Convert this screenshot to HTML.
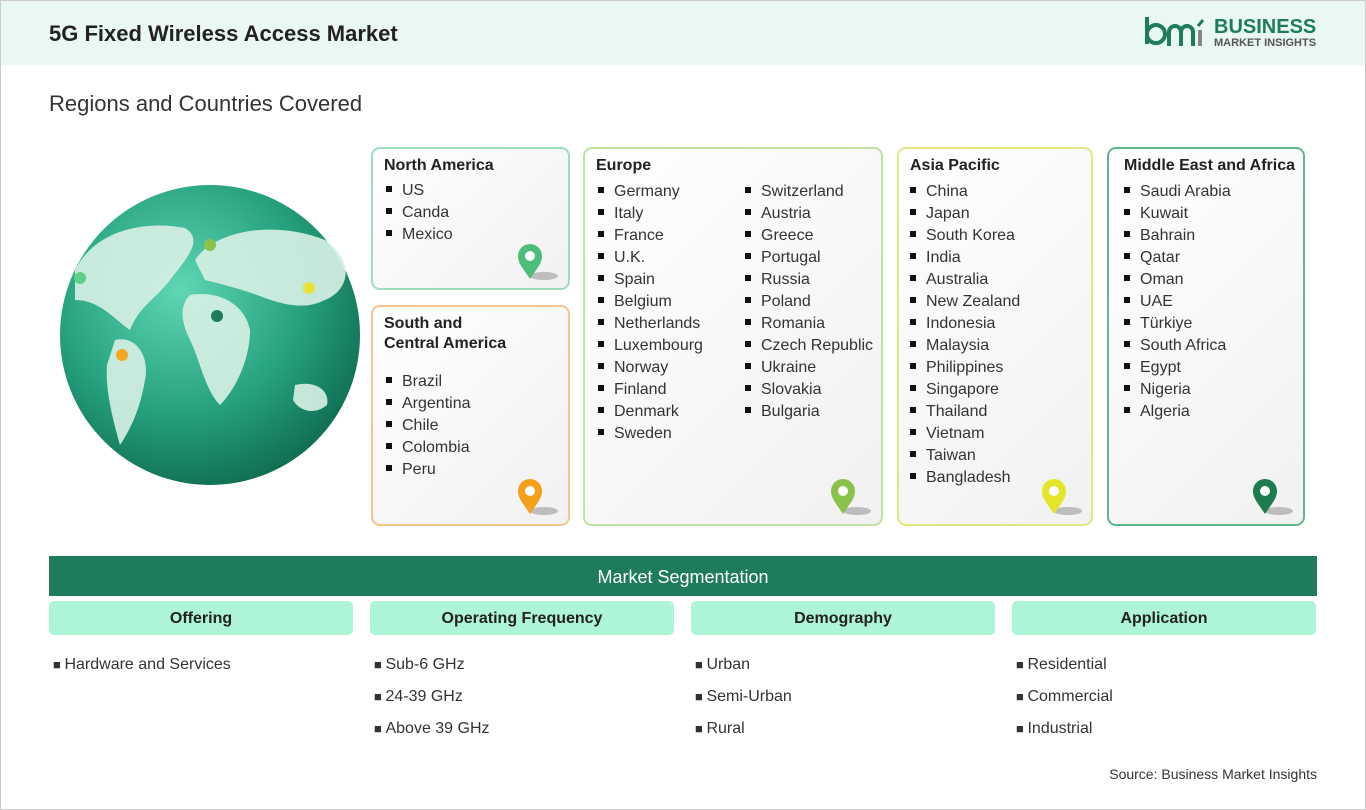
<!DOCTYPE html>
<html><head><meta charset="utf-8"><style>
*{margin:0;padding:0;box-sizing:border-box}
body{width:1366px;height:810px;background:#fff;font-family:"Liberation Sans",sans-serif;position:relative;overflow:hidden;color:#222}
.frame{position:absolute;left:0;top:0;width:1366px;height:810px;border:1px solid #ccc}
.hdr{position:absolute;left:1px;top:1px;width:1364px;height:64px;background:#e9f9f1}
.title{position:absolute;left:49px;top:21px;font-size:22px;font-weight:bold;color:#222}
.sub{position:absolute;left:49px;top:91px;font-size:22px;color:#333}
.box{position:absolute;border:2px solid;border-radius:9px;background:linear-gradient(135deg,#fff 0%,#f1f1f1 100%)}
.box h3{position:absolute;left:11px;top:7px;font-size:16px;font-weight:bold;color:#222;line-height:20px}
.box ul{position:absolute;list-style:none;font-size:16px;color:#333;line-height:22px}
.box li:before{content:"";display:inline-block;width:6px;height:6px;background:#111;margin-right:10px;vertical-align:3px}
.seg{position:absolute;left:49px;top:556px;width:1268px;height:40px;background:#1e7b5e;color:#fff;font-size:18px;text-align:center;line-height:42px}
.sh{position:absolute;top:601px;width:304px;height:34px;background:#aef5d8;border-radius:5px;text-align:center;font-weight:bold;font-size:16px;line-height:36px;color:#222}
.it{position:absolute;font-size:16px;color:#333}
.it:before{content:"■ ";font-size:13px}
.src{position:absolute;right:49px;top:766px;font-size:14px;color:#333}
</style></head><body>
<div class="frame"></div>
<div class="hdr"></div>
<div class="title">5G Fixed Wireless Access Market</div>
<svg style="position:absolute;left:1143px;top:14px" width="66" height="36" viewBox="0 0 66 36">
<path d="M4 3 V30 M4 20 a9 9 0 1 1 0 .1" stroke="#1e7b5e" stroke-width="4" fill="none"/>
<path d="M26 32 V18 a6 6 0 0 1 12 0 V32 M38 18 a6 6 0 0 1 12 0 V32" stroke="#1e7b5e" stroke-width="4" fill="none"/>
<path d="M57 32 V16" stroke="#888" stroke-width="4"/><path d="M55 12 l5 -6" stroke="#1e7b5e" stroke-width="3"/>
</svg>
<div style="position:absolute;left:1214px;top:16px;font-size:20px;font-weight:bold;color:#1e7b5e">BUSINESS</div>
<div style="position:absolute;left:1214px;top:37px;font-size:11px;font-weight:bold;color:#555">MARKET INSIGHTS</div>
<div class="sub">Regions and Countries Covered</div>

<svg style="position:absolute;left:55px;top:180px" width="310" height="310" viewBox="0 0 310 310">
<defs><radialGradient id="g" cx="40%" cy="35%" r="70%"><stop offset="0" stop-color="#5fd6b4"/><stop offset="0.6" stop-color="#25a07c"/><stop offset="1" stop-color="#0f6a50"/></radialGradient></defs>
<ellipse cx="155" cy="155" rx="150" ry="150" fill="url(#g)"/>
<g fill="#d8f1e6" opacity="0.9">
<path d="M20 90 C40 50 90 40 130 48 C150 60 130 80 115 100 C100 120 85 125 75 150 C60 140 45 120 20 120 Z"/>
<path d="M60 160 C80 155 95 175 90 200 C85 230 75 250 65 265 C58 240 50 210 52 185 Z"/>
<path d="M140 80 C160 50 220 40 270 60 C300 80 295 110 270 120 C250 130 230 125 210 118 C190 110 170 105 150 100 Z"/>
<path d="M135 115 C165 110 190 125 195 150 C195 180 180 210 165 225 C150 210 145 180 135 160 C125 140 125 125 135 115 Z"/>
<path d="M240 205 C260 200 275 210 272 225 C260 235 245 232 238 220 Z"/>
</g>
<g><circle cx="25" cy="98" r="6" fill="#5fcf8a"/><circle cx="155" cy="65" r="6" fill="#8bc34a"/><circle cx="254" cy="108" r="6" fill="#e5e03a"/><circle cx="162" cy="136" r="6" fill="#1e7b5e"/><circle cx="67" cy="175" r="6" fill="#f5a623"/></g>
</svg>

<div class="box" style="left:371px;top:147px;width:199px;height:143px;border-color:#9edcbd">
<h3>North America</h3><ul style="left:13px;top:31px"><li>US</li><li>Canda</li><li>Mexico</li></ul>
<svg style="position:absolute;left:143px;top:94px" width="45" height="40"><ellipse cx="28" cy="33" rx="14" ry="4" fill="#888" opacity=".5"/><path d="M14 36 C6 24 2 20 2 13 a12 12 0 0 1 24 0 C26 20 22 24 14 36Z" fill="#4dbd7a"/><circle cx="14" cy="13" r="5" fill="#fff"/></svg></div>

<div class="box" style="left:371px;top:305px;width:199px;height:221px;border-color:#f5c68a">
<h3>South and<br>Central America</h3><ul style="left:13px;top:64px"><li>Brazil</li><li>Argentina</li><li>Chile</li><li>Colombia</li><li>Peru</li></ul>
<svg style="position:absolute;left:143px;top:171px" width="45" height="40"><ellipse cx="28" cy="33" rx="14" ry="4" fill="#888" opacity=".5"/><path d="M14 36 C6 24 2 20 2 13 a12 12 0 0 1 24 0 C26 20 22 24 14 36Z" fill="#f5a01a"/><circle cx="14" cy="13" r="5" fill="#fff"/></svg></div>

<div class="box" style="left:583px;top:147px;width:300px;height:379px;border-color:#c0e2a0">
<h3>Europe</h3><ul style="left:13px;top:32px"><li>Germany</li><li>Italy</li><li>France</li><li>U.K.</li><li>Spain</li><li>Belgium</li><li>Netherlands</li><li>Luxembourg</li><li>Norway</li><li>Finland</li><li>Denmark</li><li>Sweden</li></ul>
<ul style="left:160px;top:32px"><li>Switzerland</li><li>Austria</li><li>Greece</li><li>Portugal</li><li>Russia</li><li>Poland</li><li>Romania</li><li>Czech Republic</li><li>Ukraine</li><li>Slovakia</li><li>Bulgaria</li></ul>
<svg style="position:absolute;left:244px;top:329px" width="45" height="40"><ellipse cx="28" cy="33" rx="14" ry="4" fill="#888" opacity=".5"/><path d="M14 36 C6 24 2 20 2 13 a12 12 0 0 1 24 0 C26 20 22 24 14 36Z" fill="#8bc34a"/><circle cx="14" cy="13" r="5" fill="#fff"/></svg></div>

<div class="box" style="left:897px;top:147px;width:196px;height:379px;border-color:#e3e880">
<h3>Asia Pacific</h3><ul style="left:11px;top:32px"><li>China</li><li>Japan</li><li>South Korea</li><li>India</li><li>Australia</li><li>New Zealand</li><li>Indonesia</li><li>Malaysia</li><li>Philippines</li><li>Singapore</li><li>Thailand</li><li>Vietnam</li><li>Taiwan</li><li>Bangladesh</li></ul>
<svg style="position:absolute;left:141px;top:329px" width="45" height="40"><ellipse cx="28" cy="33" rx="14" ry="4" fill="#888" opacity=".5"/><path d="M14 36 C6 24 2 20 2 13 a12 12 0 0 1 24 0 C26 20 22 24 14 36Z" fill="#e5e52a"/><circle cx="14" cy="13" r="5" fill="#fff"/></svg></div>

<div class="box" style="left:1107px;top:147px;width:198px;height:379px;border-color:#5fb88a">
<h3 style="left:15px">Middle East and Africa</h3><ul style="left:15px;top:32px"><li>Saudi Arabia</li><li>Kuwait</li><li>Bahrain</li><li>Qatar</li><li>Oman</li><li>UAE</li><li>Türkiye</li><li>South Africa</li><li>Egypt</li><li>Nigeria</li><li>Algeria</li></ul>
<svg style="position:absolute;left:142px;top:329px" width="45" height="40"><ellipse cx="28" cy="33" rx="14" ry="4" fill="#888" opacity=".5"/><path d="M14 36 C6 24 2 20 2 13 a12 12 0 0 1 24 0 C26 20 22 24 14 36Z" fill="#1e7b4e"/><circle cx="14" cy="13" r="5" fill="#fff"/></svg></div>

<div class="seg">Market Segmentation</div>
<div class="sh" style="left:49px">Offering</div>
<div class="sh" style="left:370px">Operating Frequency</div>
<div class="sh" style="left:691px">Demography</div>
<div class="sh" style="left:1012px">Application</div>
<div class="it" style="left:53px;top:656px">Hardware and Services</div>
<div class="it" style="left:374px;top:656px">Sub-6 GHz</div>
<div class="it" style="left:374px;top:688px">24-39 GHz</div>
<div class="it" style="left:374px;top:720px">Above 39 GHz</div>
<div class="it" style="left:695px;top:656px">Urban</div>
<div class="it" style="left:695px;top:688px">Semi-Urban</div>
<div class="it" style="left:695px;top:720px">Rural</div>
<div class="it" style="left:1016px;top:656px">Residential</div>
<div class="it" style="left:1016px;top:688px">Commercial</div>
<div class="it" style="left:1016px;top:720px">Industrial</div>
<div class="src">Source: Business Market Insights</div>
</body></html>
